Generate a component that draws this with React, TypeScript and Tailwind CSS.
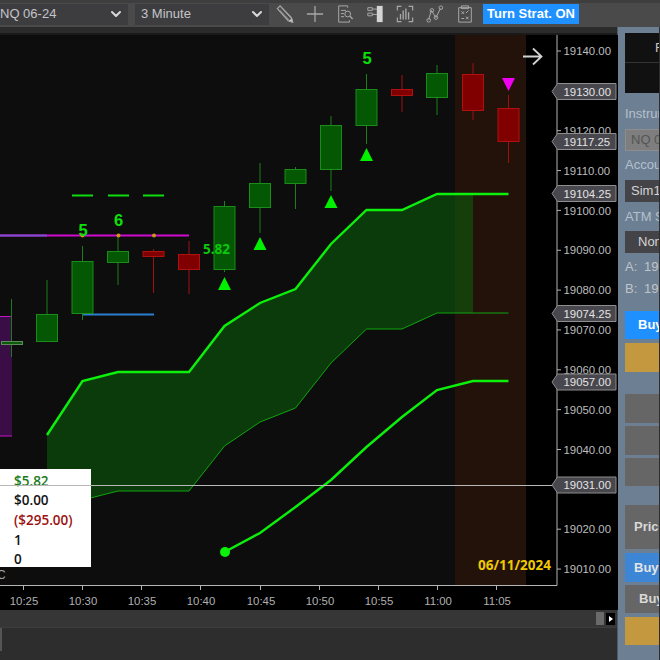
import { ChevronDown } from "lucide-react";

const sans = "font-['Liberation_Sans',Arial,sans-serif]";

type Candle = { x: number; top: number; bottom: number; hi: number; lo: number; up: boolean };

const candles: Candle[] = [
  { x: 47, top: 314, bottom: 341, hi: 280, lo: 342, up: true },
  { x: 82.5, top: 261, bottom: 313, hi: 246, lo: 320, up: true },
  { x: 118, top: 251, bottom: 262, hi: 235, lo: 285, up: true },
  { x: 153.5, top: 251, bottom: 256, hi: 249, lo: 293, up: false },
  { x: 189, top: 254, bottom: 269, hi: 241, lo: 294, up: false },
  { x: 224.5, top: 206, bottom: 269, hi: 201, lo: 272, up: true },
  { x: 260, top: 183, bottom: 207, hi: 163, lo: 233, up: true },
  { x: 295.5, top: 169, bottom: 183, hi: 167, lo: 209, up: true },
  { x: 331, top: 125, bottom: 169, hi: 116, lo: 191, up: true },
  { x: 366.5, top: 89, bottom: 125, hi: 74, lo: 144, up: true },
  { x: 402, top: 89, bottom: 95, hi: 75, lo: 112, up: false },
  { x: 437, top: 73, bottom: 97, hi: 65, lo: 115, up: true },
  { x: 473, top: 74, bottom: 110, hi: 63, lo: 120, up: false },
  { x: 508.5, top: 108, bottom: 141, hi: 95, lo: 163, up: false },
];

const priceTicks = [19140, 19120, 19110, 19100, 19090, 19080, 19070, 19060, 19050, 19040, 19020, 19010];
const timeTicks = [
  ["10:25", 23], ["10:30", 82], ["10:35", 141], ["10:40", 200], ["10:45", 260],
  ["10:50", 319], ["10:55", 378], ["11:00", 437], ["11:05", 496],
] as const;
const flags = [
  ["19130.00", 91.5], ["19117.25", 141.5], ["19104.25", 193.5],
  ["19074.25", 313.5], ["19057.00", 382], ["19031.00", 485],
] as const;

const upper = "47,435 82.5,381 118,372 189,372 224.5,326 260,303 295.5,289 331,244 366.5,210 402,210 437,194";
const lower = "473,313 437,313 402,329 366.5,329 331,363 295.5,408 260,422 224.5,446 189,491 118,491 82.5,500 47,510";
const triangles = [224.5, 260, 331, 366.5];
const triangleY = [277, 237, 195, 148];

function Chart() {
  return (
    <svg viewBox="0 35 618 575" className="block w-[618px] h-[575px]" fontFamily="'Liberation Sans', Arial, sans-serif">
      <rect x="0" y="35" width="618" height="575" fill="#000" />
      <rect x="0" y="35" width="455" height="550" fill="#0d0d0d" />
      <rect x="455" y="35" width="71" height="550" fill="#22120a" />

      {/* purple block on the left */}
      <rect x="0" y="316" width="12" height="120" fill="#3a0d46" />
      <path d="M0 316.5H12M0 436H12" stroke="#c814c8" strokeWidth="1" />

      {/* cloud */}
      <polygon points={`${upper} 473,194 ${lower}`} fill="#0a6a0a" fillOpacity="0.5" />
      <polyline points={lower} fill="none" stroke="#0fa50f" strokeWidth="1" />
      <polyline points="473,313 508.5,313" fill="none" stroke="#0fa50f" strokeWidth="1" />
      <polyline points={`${upper} 473,194 508.5,194`} fill="none" stroke="#0cf00c" strokeWidth="2.4" />
      <polyline
        points="224.5,552 260,533 295.5,507 331,480 366.5,447 402,417 437,390 473,381 508.5,381"
        fill="none"
        stroke="#0cf00c"
        strokeWidth="2.4"
      />
      <circle cx="225" cy="552" r="5" fill="#0cf00c" />

      {/* zones and dashes */}
      <path d="M0 235.5H189" stroke="#d20ad2" strokeWidth="2.2" />
      <path d="M0 235.5H47" stroke="#7a50c8" strokeWidth="2.2" />
      <path d="M83 314.5H154" stroke="#2a7fd0" strokeWidth="2" />
      <path d="M72 195.5H93M108 195.5H129M143 195.5H164" stroke="#0fdc0f" strokeWidth="2" />

      {/* doji at the left edge */}
      <path d="M11.5 299V357" stroke="#1f7a1f" />
      <rect x="1.5" y="341.5" width="21" height="3" fill="#0a5c0a" stroke="#5f8a5f" />

      {candles.map((c) => (
        <g key={c.x}>
          <path d={`M${c.x} ${c.hi}V${c.lo}`} stroke={c.up ? "#1a801a" : "#a01010"} strokeWidth="1" />
          <rect
            x={c.x - 10.5}
            y={c.top + 0.5}
            width="21"
            height={c.bottom - c.top}
            fill={c.up ? "#045804" : "#800000"}
            stroke={c.up ? "#1a8c1a" : "#b01010"}
          />
        </g>
      ))}

      <circle cx="82.5" cy="235.5" r="2" fill="#c89a10" />
      <circle cx="118.5" cy="235.5" r="2" fill="#c89a10" />
      <circle cx="154" cy="235.5" r="2" fill="#c89a10" />

      {triangles.map((x, i) => (
        <polygon key={x} points={`${x},${triangleY[i]} ${x - 6.5},${triangleY[i] + 13} ${x + 6.5},${triangleY[i] + 13}`} fill="#00f000" />
      ))}
      <polygon points="502,78 515,78 508.5,91" fill="#f000f0" />

      <g fill="#0be00b" fontWeight="700" fontSize="16.5" textAnchor="middle">
        <text x="83" y="235.5">5</text>
        <text x="118.5" y="225.5">6</text>
        <text x="367" y="63.5">5</text>
      </g>
      <text x="203" y="254" fill="#0cc80c" fontWeight="700" fontSize="13.5" fontFamily="'Noto Sans', sans-serif">5.82</text>
      <text x="551" y="569.5" fill="#f0c800" fontWeight="700" fontSize="13.5" textAnchor="end" fontFamily="'Open Sans', sans-serif">06/11/2024</text>
      <text x="-3" y="579" fill="#a0a0a0" fontSize="12">C</text>

      <path d="M523 56.5H541M533 48.5L541.5 56.5L533 64.5" fill="none" stroke="#d4d4d4" strokeWidth="1.8" />

      {/* axes */}
      <path d="M0 585.5H557V35" fill="none" stroke="#b4b4b4" strokeWidth="1" />
      {priceTicks.map((p) => {
        const y = 51 + (19140 - p) * 3.985;
        return (
          <g key={p}>
            <path d={`M557 ${y}H561`} stroke="#b4b4b4" />
            <text x="563.5" y={y + 4.2} fill="#bdbdbd" fontSize="11.4">{p}.00</text>
          </g>
        );
      })}
      {timeTicks.map(([label, x]) => (
        <g key={label}>
          <path d={`M${x + 0.5} 585V590`} stroke="#b4b4b4" />
          <text x={x + 1} y="604.5" fill="#b0b0b0" fontSize="11.4" textAnchor="middle">{label}</text>
        </g>
      ))}

      {flags.map(([label, y]) => (
        <g key={label}>
          <polygon
            points={`552,${y} 557.5,${y - 8} 616,${y - 8} 616,${y + 8} 557.5,${y + 8}`}
            fill="#47474d"
            stroke="#8e8e8e"
          />
          <text x="563.5" y={y + 4.2} fill="#e4e4e4" fontSize="11.4">{label}</text>
        </g>
      ))}
    </svg>
  );
}

function Legend() {
  return (
    <div className="absolute left-0 top-[434px] w-[91px] h-[98px] bg-white pl-[14px] pt-[2.5px] font-['Open_Sans',sans-serif] text-[13.5px] leading-[19.7px] font-semibold text-[#111]">
      <div className="text-[#1a7a1a]">$5.82</div>
      <div>$0.00</div>
      <div className="text-[#9c1010]">($295.00)</div>
      <div>1</div>
      <div>0</div>
    </div>
  );
}

function Select({ label, className }: { label: string; className: string }) {
  return (
    <div className={`flex items-center justify-between h-[21px] bg-[#3d3d40] text-[13px] text-[#c4c4c8] ${className}`}>
      <span>{label}</span>
      <ChevronDown size={16} strokeWidth={3} className="text-[#d8d8d8]" />
    </div>
  );
}

function ToolIcon({ children, className }: { children: React.ReactNode; className: string }) {
  return (
    <svg viewBox="0 0 20 20" fill="none" stroke="#a8a8a8" strokeWidth="1.1" className={`w-[18px] h-[18px] shrink-0 ${className}`}>
      {children}
    </svg>
  );
}

function Toolbar() {
  return (
    <div className={`flex items-center h-[27px] bg-[#4a4a4a] border-t-[3px] border-t-[#3e3e3e] pb-[2px] ${sans}`}>
      <Select label="NQ 06-24" className="w-[128px] pr-[4px]" />
      <Select label="3 Minute" className="w-[134px] ml-[7px] pl-[6px] pr-[4px]" />
      <ToolIcon className="ml-[7px]">
        <path d="M1.5 4L4.5 1L17 14L18.5 19L13.5 17.5Z" strokeWidth="1.4" />
        <path d="M4 5.5L15 17M6.5 3.5L17 15" strokeWidth="0.9" />
        <path d="M14.5 18L18.5 19L17.5 15Z" fill="#d0d0d0" />
      </ToolIcon>
      <ToolIcon className="ml-[12px]">
        <path d="M10 1V19M1 10H19" strokeWidth="1.4" />
      </ToolIcon>
      <ToolIcon className="ml-[12px]">
        <path d="M13 3V1H3V19H15V17M5.5 6H11M5.5 9.5H9M5.5 13H9" />
        <circle cx="13" cy="10" r="3.2" />
        <path d="M15.5 12.5L18.5 15.5" strokeWidth="1.6" />
      </ToolIcon>
      <ToolIcon className="ml-[12px]">
        <path d="M2 3H7V6H2ZM2 9H7V12H2ZM7 4.5H12M7 10.5H12" />
        <rect x="12" y="1" width="6.5" height="18" fill="#d4d4d4" stroke="none" />
      </ToolIcon>
      <ToolIcon className="ml-[12px]">
        <path d="M1.5 6V1.5H6M14 1.5H18.5V6M1.5 14V18.5H6M14 18.5H18.5V14" strokeWidth="1.3" />
        <path d="M5 16V10M8 16V6M11 16V4M14 16V8" strokeWidth="1.5" />
      </ToolIcon>
      <ToolIcon className="ml-[12px]">
        <path d="M3 16L6 6L11 14L16 4" />
        <circle cx="3" cy="17" r="2" />
        <circle cx="6.5" cy="6" r="2" />
        <circle cx="11" cy="14" r="2" />
        <circle cx="16.5" cy="3" r="2" />
      </ToolIcon>
      <ToolIcon className="ml-[12px]">
        <path d="M3 3H17V19H3ZM6 1H14V4H6Z" />
        <path d="M6 7L9 10M9 7L6 10M11 9L14 6M11 13L14 16M14 13L11 16M6 15H9" />
      </ToolIcon>
      <div className="ml-[9px] flex items-center justify-center w-[96px] h-[20px] bg-[#1e90ff] text-[13px] font-bold text-white">
        Turn Strat. ON
      </div>
    </div>
  );
}

function Scrollbar() {
  return (
    <div className="flex items-center justify-end h-[17px] bg-[#363636] pr-[3px]">
      <div className="w-[8px] h-[13px] bg-[#6a6a6a] mr-[2px]" />
      <div className="flex items-center justify-center w-[9px] h-[12px] bg-black">
        <div className="w-0 h-0 border-y-[3px] border-y-transparent border-l-[4px] border-l-white" />
      </div>
    </div>
  );
}

const box = "w-[200px] shrink-0 flex items-center";

function SidePanel() {
  return (
    <div className={`w-[42px] overflow-hidden flex flex-col pt-[6px] pl-[7px] bg-[#6d7f93] border-l border-l-[#4e5a68] -ml-px text-[13px] leading-[14px] ${sans}`}>
      <div className="w-[200px] h-[60px] bg-[#111] shrink-0 flex flex-col text-[#c8c8c8]">
        <div className="h-[30px] border-b border-b-[#333] pl-[30px] pt-[8px]">F</div>
      </div>
      <div className="mt-[14px] h-[14px] text-[#b4c0cc] whitespace-nowrap">Instrument</div>
      <div className={`${box} mt-[8px] h-[22px] bg-[#7e7e7e] border border-[#8e8e8e] pl-[5px] text-[#555]`}>NQ 06-24</div>
      <div className="mt-[7px] h-[14px] text-[#b4c0cc] whitespace-nowrap">Account</div>
      <div className={`${box} mt-[8px] h-[22px] bg-[#444448] pl-[6px] text-[#d4d4d4]`}>Sim101</div>
      <div className="mt-[8px] h-[14px] text-[#b4c0cc] whitespace-nowrap">ATM Strategy</div>
      <div className={`${box} mt-[7px] h-[22px] bg-[#444448] pl-[13px] text-[#d4d4d4]`}>None</div>
      <div className="mt-[7px] h-[14px] w-[200px] flex text-[#c0c4c8]">
        <span className="w-[19px]">A:</span>
        <span>19117.25</span>
      </div>
      <div className="mt-[8px] h-[14px] w-[200px] flex text-[#c0c4c8]">
        <span className="w-[19px]">B:</span>
        <span>19117.00</span>
      </div>
      <div className={`${box} mt-[15px] h-[28px] bg-[#1e90ff] pl-[13px] font-bold text-white`}>Buy</div>
      <div className={`${box} mt-[4px] h-[29px] bg-[#c4983e]`} />
      <div className={`${box} mt-[22px] h-[29px] bg-[#666]`} />
      <div className={`${box} mt-[3px] h-[29px] bg-[#666]`} />
      <div className={`${box} mt-[3px] h-[28px] bg-[#666]`} />
      <div className={`${box} mt-[19px] h-[44px] bg-[#666] pl-[9px] font-bold text-[#d8d8d8]`}>Price</div>
      <div className={`${box} mt-[4px] h-[29px] bg-[#3d86d6] pl-[9px] font-bold text-[#e4e4e4]`}>Buy</div>
      <div className={`${box} mt-[3px] h-[28px] bg-[#666] pl-[14px] font-bold text-[#d8d8d8]`}>Buy</div>
      <div className={`${box} mt-[4px] h-[28px] bg-[#c4983e]`} />
    </div>
  );
}

export default function App() {
  return (
    <div className="w-[660px] h-[660px] overflow-hidden flex flex-col bg-[#2d2d2d]">
      <Toolbar />
      <div className="flex flex-1 min-h-0">
        <div className="w-[618px] flex flex-col">
          <div className="h-[8px] bg-[#2b2b2b] border-b-2 border-b-[#1a1a1a]" />
          <div className="relative h-[575px]">
            <Chart />
            <Legend />
            <div className="absolute left-0 top-[450px] w-[552px] h-px bg-[#b8b8b8]" />
          </div>
          <Scrollbar />
          <div className="flex-1 border-t border-t-[#3e3e3e]">
            <div className="w-[2px] h-[23px] bg-[#555]" />
          </div>
        </div>
        <SidePanel />
      </div>
    </div>
  );
}
